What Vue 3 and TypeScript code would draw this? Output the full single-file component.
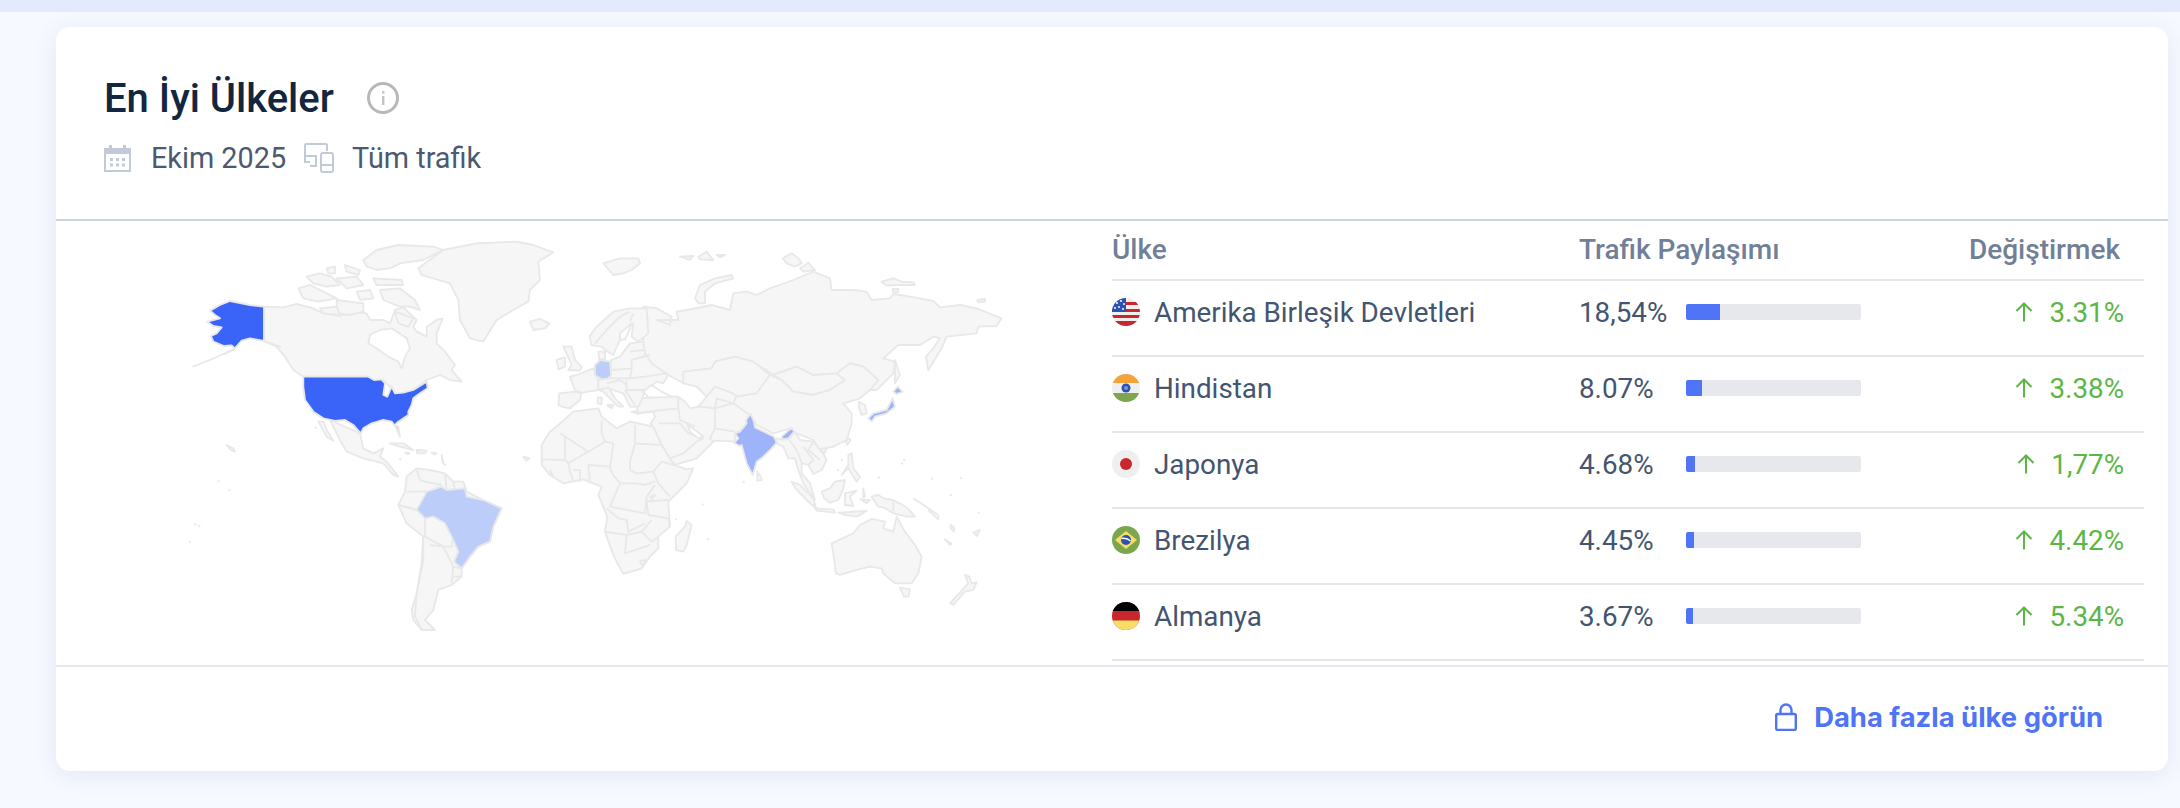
<script setup lang="ts">
type Shape = [string, string];
interface MapGroup {
  x: number;
  y: number;
  shapes: Shape[];
}

interface CountryRow {
  code: string;
  name: string;
  share: string;
  bar: number;
  change: string;
}

const rows: CountryRow[] = [
  { code: 'us', name: 'Amerika Birleşik Devletleri', share: '18,54%', bar: 34, change: '3.31%' },
  { code: 'in', name: 'Hindistan', share: '8.07%', bar: 16, change: '3.38%' },
  { code: 'jp', name: 'Japonya', share: '4.68%', bar: 9, change: '1,77%' },
  { code: 'br', name: 'Brezilya', share: '4.45%', bar: 8, change: '4.42%' },
  { code: 'de', name: 'Almanya', share: '3.67%', bar: 7, change: '5.34%' },
];

// traced from the reference, each group has its own origin
const mapGroups: MapGroup[] = [
  {
    x: 150,
    y: 220,
    shapes: [
      ['land', '342,260 400,262 440,252 490,265 520,280 570,288 610,275 650,280 660,300 700,300 720,310 735,270 760,262 800,300 790,320 800,335 830,350 830,320 860,300 878,295 860,340 860,370 885,395 915,435 905,450 935,485 900,480 870,465 830,480 790,510 760,525 735,530 725,505 700,480 670,488 655,470 460,470 430,450 405,410 375,375 342,363'],
      ['water', '660,345 690,330 725,325 770,355 780,385 765,410 755,445 745,425 715,410 680,385 655,370'],
      ['land', '805,145 880,90 980,70 1100,65 1150,75 1210,97 1165,125 1170,180 1140,210 1135,245 1090,270 1040,300 1000,365 960,355 930,300 925,240 900,190 850,175 815,165'],
      ['land', '470,170 510,160 545,170 570,195 530,200 490,190'],
      ['land', '445,205 480,195 520,215 560,235 505,245 460,235'],
      ['land', '530,145 555,140 555,160 535,160'],
      ['land', '585,135 630,150 625,165 590,155'],
      ['land', '560,175 620,170 640,195 590,205'],
      ['land', '640,120 680,90 745,75 850,80 880,90 820,120 750,130 720,145 680,150 650,140'],
      ['land', '670,175 755,180 760,195 680,195'],
      ['land', '620,215 660,210 670,235 630,240'],
      ['land', '690,210 750,205 795,240 810,270 780,260 750,260 700,240'],
      ['land', '560,240 640,250 640,275 600,285 560,280'],
      ['land', '510,265 560,260 570,285 520,280'],
      ['land', '735,275 790,295 775,320 745,310'],
      ['line', '128,440 180,420 220,402'],
      ['us', '342,260 300,255 240,243 210,255 180,272 195,285 210,295 172,305 190,318 215,322 200,340 183,348 190,365 222,378 245,376 255,385 235,395 220,403 250,390 275,362 300,355 342,363'],
      ['us', '345,365 365,372 390,380 375,378'],
      ['us', '460,470 655,470 672,480 695,478 705,490 700,525 712,530 725,500 735,520 760,518 790,510 830,485 833,505 810,520 790,535 785,555 775,575 775,585 745,605 735,615 745,620 750,650 740,625 725,605 700,600 665,610 640,625 632,640 610,615 585,600 555,603 520,595 490,575 465,540 460,500'],
    ],
  },
  {
    x: 150,
    y: 420,
    shapes: [
      ['land', '505,5 530,50 550,62 530,30 520,5'],
      ['land', '540,0 630,40 640,85 670,100 700,85 690,110 710,125 745,170 730,165 700,130 640,115 590,95 570,60'],
      ['land', '720,70 760,70 790,90 750,80'],
      ['land', '800,90 830,92 825,100 802,100'],
      ['land', '765,98 778,98 775,103'],
      ['land', '230,75 250,85 255,95 242,90'],
      ['land', '1120,110 1138,115 1130,122'],
      ['land', '205,183 207,184'],
      ['land', '237,210 239,211'],
      ['land', '135,313 137,314'],
      ['land', '147,318 149,319'],
      ['land', '118,365 120,366'],
      ['land', '497,23 499,24'],
      ['land', '750,117 752,118'],
      ['land', '875,105 878,128 885,135 880,128'],
      ['land', '845,98 860,100 855,103'],
      ['land', '770,170 800,145 840,150 885,160 910,185 940,185 950,215 1000,240 1055,265 1030,320 1020,365 985,380 960,410 935,445 935,470 905,495 865,510 850,570 825,600 855,630 815,630 790,600 785,570 800,520 820,420 820,350 770,310 745,255 765,215'],
      ['line', '770,215 830,215'],
      ['line', '800,150 810,180 825,185 875,195'],
      ['line', '885,160 890,210'],
      ['line', '910,185 915,210'],
      ['line', '745,255 800,270'],
      ['line', '825,295 825,350 880,380 905,380 910,350'],
      ['line', '820,350 815,430 800,520 795,590 815,628'],
      ['line', '840,375 880,380 910,440 905,490'],
      ['line', '905,440 935,445'],
      ['line', '905,470 935,470'],
      ['br', '800,270 830,215 875,200 890,210 945,205 950,230 1000,240 1055,265 1030,320 1020,365 985,380 960,410 935,445 912,425 925,395 905,350 885,310 850,290 825,295'],
    ],
  },
  {
    x: 600,
    y: 220,
    shapes: [
      ['land', '130,260 170,265 215,290 210,315 170,300 235,300 230,275 260,270 335,255 390,270 400,220 440,215 470,225 510,205 580,180 640,155 690,175 695,210 760,210 800,215 815,240 870,235 880,222 930,230 1000,243 1020,262 1080,255 1130,265 1205,295 1190,318 1135,320 1130,340 1040,350 1025,385 985,450 978,410 1000,385 1020,355 1000,350 960,375 895,375 850,415 885,425 880,460 830,510 810,510 835,480 790,440 750,430 710,460 640,465 590,440 520,465 460,425 405,410 345,425 335,445 255,455 250,490 205,465 150,435 125,400 130,370 125,320 145,300 125,270'],
      ['land', '250,455 335,445 345,425 405,410 460,425 510,465 480,510 470,520 410,530 400,550 345,565 295,560 320,530 290,500 250,490'],
      ['land', '520,465 590,440 640,465 710,460 735,480 690,510 640,525 580,515 545,480'],
      ['land', '510,465 545,480 580,515 640,525 690,510 735,480 710,460 750,430 790,440 835,480 810,510 780,535 730,550 755,580 755,610 740,660 700,680 660,690 640,660 590,640 570,625 520,640 470,615 455,590 400,550 410,530 470,520'],
      ['land', '775,545 795,555 800,580 785,585 778,565'],
      ['land', '885,420 900,465 885,490 885,450'],
      ['land', '285,235 300,195 345,175 395,165 400,175 345,190 315,215 315,250 295,250'],
      ['land', '10,130 60,115 115,115 120,130 95,150 70,160 40,165'],
      ['land', '240,110 280,108 270,120'],
      ['land', '295,110 320,95 340,120 300,118'],
      ['land', '350,105 375,105 360,112'],
      ['land', '548,115 575,100 595,115 605,130 585,140 560,130'],
      ['land', '600,145 625,128 645,150 610,155'],
      ['land', '845,185 880,175 905,185 940,187 945,195 890,195 860,197'],
      ['land', '878,207 895,207 895,217 880,217'],
      ['land', '1132,240 1155,237 1155,245 1135,247'],
      ['land', '115,535 190,530 235,530 255,545 270,565 295,560 345,565 400,550 455,590 435,625 405,640 405,665 345,662 335,670 290,715 225,735 208,715 160,630 152,610 165,590 160,575 110,580'],
      ['line', '110,580 170,572 235,565 235,530'],
      ['line', '235,565 240,600 285,620'],
      ['line', '345,565 345,625 330,655 340,665'],
      ['line', '345,625 405,635'],
      ['line', '175,610 240,610 265,640 310,655'],
      ['line', '210,715 250,700 290,665 310,655'],
      ['line', '320,530 345,500 400,520 410,530'],
      ['line', '345,565 350,535 400,550'],
      ['water', '262,615 285,630 310,650 295,655 270,635'],
      ['land', '530,655 548,660 568,655 585,635 600,660 640,665 660,690 670,700 680,720 665,750 640,762 625,735 605,730 605,760 630,790 645,840 610,790 595,750 585,715 565,715 550,680 530,670'],
      ['line', '568,660 590,690 600,715 605,730'],
      ['line', '610,680 640,720 625,735'],
      ['line', '640,665 625,690 660,720'],
      ['land', '472,755 482,770 485,780 472,782'],
      ['land', '575,785 600,795 640,835 648,865 620,840 590,810'],
      ['land', '645,865 700,868 705,878 650,872'],
      ['land', '715,878 800,873 770,890 735,885'],
      ['land', '665,815 690,805 705,785 735,780 730,805 715,840 690,848 672,835'],
      ['land', '735,820 770,812 750,830 760,858 735,855'],
      ['land', '780,838 810,840 800,850'],
      ['land', '790,805 795,830 790,832'],
      ['land', '745,705 755,700 760,745 780,770 770,785 745,745 725,765 745,735'],
      ['land', '745,655 752,660 742,675 738,665'],
      ['land', '665,685 680,685 675,698 665,695'],
      ['land', '815,830 835,825 850,835 880,840 920,862 945,890 920,890 880,880 850,862 835,860'],
      ['line', '880,845 880,875'],
      ['line', '940,835 985,865 1015,885 1015,898 985,870'],
      ['land', '1052,915 1062,922 1062,935 1052,925'],
      ['land', '1035,958 1055,972 1050,975'],
      ['land', '1120,937 1140,930 1130,948'],
      ['land', '695,970 760,940 780,915 815,897 855,905 850,925 880,935 890,890 915,935 945,975 965,1010 955,1060 935,1090 885,1090 850,1060 845,1045 810,1040 770,1050 720,1065 708,1060 700,1000'],
      ['land', '900,1103 930,1108 925,1130 912,1130'],
      ['land', '1095,1065 1108,1070 1115,1090 1130,1087 1120,1110 1095,1115 1060,1155 1050,1150 1085,1112 1105,1090'],
      ['land', '430,785 432,786'],
      ['land', '308,853 310,854'],
      ['land', '228,898 230,899'],
      ['land', '322,957 324,958'],
      ['land', '912,720 914,721'],
      ['land', '905,730 907,731'],
      ['land', '836,772 838,773'],
      ['land', '995,776 997,777'],
      ['land', '1082,774 1084,775'],
      ['land', '1052,825 1054,826'],
      ['land', '1135,878 1137,879'],
      ['land', '725,720 727,721'],
      ['land', '712,750 714,751'],
      ['in', '452,582 438,600 440,610 420,635 405,640 415,655 403,668 418,678 425,675 440,730 458,765 470,725 490,710 512,688 530,668 522,650 465,622 462,605'],
      ['in', '545,650 575,623 583,635 565,655 548,658'],
      ['in', '820,580 860,570 878,535 885,560 860,580 825,590 815,605 805,595'],
      ['in', '880,515 893,500 908,515 890,522'],
    ],
  },
  {
    x: 530,
    y: 310,
    shapes: [
      ['land', '88,250 135,245 155,250 150,270 120,295 95,290 85,285'],
      ['land', '120,200 140,195 190,175 205,210 205,240 155,248 135,240'],
      ['land', '100,110 125,110 135,150 155,170 150,182 115,180 125,165'],
      ['land', '80,150 105,142 105,170 85,178'],
      ['land', '0,35 30,27 58,40 45,55 10,60'],
      ['land', '205,125 225,125 225,150 208,148'],
      ['land', '178,80 200,50 250,5 300,-5 350,-5 355,70 325,95 305,80 310,40 285,60 265,100 250,135 225,120 215,110 185,105'],
      ['water', '270,70 305,40 298,60 285,88 270,90'],
      ['land', '243,150 270,140 300,100 340,95 345,130 365,160 415,195 400,220 380,215 345,240 335,270 325,290 300,290 280,250 235,235 205,240 205,210 235,205 243,195'],
      ['land', '205,240 235,232 255,265 280,290 265,290 240,265 220,245'],
      ['land', '203,262 215,262 215,282 203,280'],
      ['land', '232,285 250,285 245,295'],
      ['land', '305,305 325,305 325,312'],
      ['land', '235,290 240,292'],
      ['line', '245,180 305,175 305,150 360,135'],
      ['line', '305,175 300,205 345,200 410,190'],
      ['line', '235,205 300,205'],
      ['line', '290,210 290,240 345,240'],
      ['line', '230,220 270,210 290,225'],
      ['line', '300,125 345,120'],
      ['line', '285,240 315,285'],
      ['line', '195,100 230,60 270,20 300,5'],
      ['line', '310,10 300,35'],
      ['water', '340,245 365,225 395,245 425,260 405,262 355,262'],
      ['de', '195,165 210,150 240,155 243,195 235,205 215,208 195,195'],
    ],
  },
  {
    x: 530,
    y: 420,
    shapes: [
      ['land', '35,75 60,35 85,15 130,-25 205,-35 215,-10 260,25 300,5 370,20 395,75 432,135 470,148 490,145 470,190 430,230 415,245 420,320 385,350 385,385 360,410 335,445 280,462 262,430 248,400 225,335 232,290 205,225 215,200 190,190 160,178 100,190 60,165 35,135 35,110'],
      ['land', '470,303 485,315 470,375 460,395 438,390 437,350 465,320'],
      ['line', '90,40 175,95 225,65 250,70'],
      ['line', '105,50 105,120'],
      ['line', '35,118 105,120 115,130 175,95'],
      ['line', '215,0 215,40 225,65'],
      ['line', '315,15 315,70 300,125'],
      ['line', '250,70 240,145 250,165'],
      ['line', '300,125 300,150 320,160 370,155 395,125 432,135'],
      ['line', '315,70 395,75'],
      ['line', '180,190 175,135 240,140'],
      ['line', '250,165 270,190 320,190 345,195 375,185'],
      ['line', '370,155 385,190 420,230'],
      ['line', '270,190 240,260 345,280 350,230 375,195'],
      ['line', '345,245 415,240'],
      ['line', '350,245 355,285 415,295 420,320'],
      ['line', '230,265 265,295 290,300 295,335 345,310'],
      ['line', '225,335 290,345 285,400 360,375'],
      ['line', '290,345 335,335 365,300'],
      ['line', '335,335 365,365 385,350'],
      ['line', '115,130 120,155 130,185'],
      ['line', '60,150 70,170'],
      ['line', '130,150 150,150 150,185'],
      ['land', '330,423 345,420 345,430 335,435'],
      ['water', '360,230 375,225 365,238'],
    ],
  },
];
</script>

<template>
  <div class="page">
    <div class="top-band"></div>
    <div class="content">
      <section class="card">
        <header class="card-head">
          <div class="title-row">
            <h2>En İyi Ülkeler</h2>
            <svg class="info" viewBox="0 0 32 32" width="32" height="32">
              <circle cx="16" cy="16" r="14.500" fill="none" stroke="#b8b8b8" stroke-width="3" />
              <rect x="15" y="14" width="2.400" height="9" fill="#c4c4c4" />
              <rect x="15" y="9" width="2.400" height="2.600" fill="#c4c4c4" />
            </svg>
          </div>
          <div class="meta-row">
            <svg viewBox="0 0 27 28" width="27" height="28">
              <path d="M1 5h25v22H1z" fill="none" stroke="#c3cad7" stroke-width="2" />
              <rect x="1" y="4" width="25" height="6" fill="#c3cad7" />
              <rect x="5" y="1" width="3" height="5" fill="#c3cad7" />
              <rect x="19" y="1" width="3" height="5" fill="#c3cad7" />
              <g fill="#c3cad7">
                <rect x="6" y="14" width="3" height="3" /><rect x="12" y="14" width="3" height="3" /><rect x="18" y="14" width="3" height="3" />
                <rect x="6" y="19.500" width="3" height="3" /><rect x="12" y="19.500" width="3" height="3" /><rect x="18" y="19.500" width="3" height="3" />
              </g>
            </svg>
            <span class="meta-date">Ekim 2025</span>
            <svg class="device" viewBox="0 0 30 30" width="30" height="30">
              <path d="M23 8V2a1 1 0 0 0-1-1H2a1 1 0 0 0-1 1v17h5" fill="none" stroke="#c3cad7" stroke-width="2" />
              <path d="M1 13h11v10H6" fill="none" stroke="#c3cad7" stroke-width="2" />
              <rect x="17" y="10" width="12" height="19" rx="2" fill="none" stroke="#c3cad7" stroke-width="2" />
              <rect x="17" y="21" width="12" height="2" fill="#c3cad7" />
            </svg>
            <span>Tüm trafik</span>
          </div>
        </header>

        <div class="card-body">
          <div class="map-box">
            <svg viewBox="56 221 1056 444" width="1056" height="444">
              <g v-for="(g, i) in mapGroups" :key="i" :transform="`translate(${g.x} ${g.y}) scale(0.3333)`">
                <template v-for="(s, j) in g.shapes" :key="j">
                  <polyline v-if="s[0] === 'line'" class="line" :points="s[1]" />
                  <polygon v-else :class="s[0]" :points="s[1]" />
                </template>
              </g>
            </svg>
          </div>

          <div class="table">
            <div class="row head-row">
              <div class="col-name">Ülke</div>
              <div class="col-share">Trafik Paylaşımı</div>
              <div class="col-change">Değiştirmek</div>
            </div>
            <div v-for="row in rows" :key="row.code" class="row">
              <div class="col-name">
                <svg class="flag" viewBox="0 0 28 28" width="28" height="28">
                  <template v-if="row.code === 'us'">
                    <rect width="28" height="28" fill="#efefef" />
                    <g fill="#c8272e">
                      <rect y="4" width="28" height="3" /><rect y="11" width="28" height="3" />
                      <rect y="17" width="28" height="3" /><rect y="23" width="28" height="5" />
                    </g>
                    <rect width="14" height="14" fill="#2a53b5" />
                    <g fill="#fff">
                      <circle cx="5" cy="5" r="1" /><circle cx="9" cy="3" r="1" /><circle cx="12" cy="6" r="1" />
                      <circle cx="3" cy="10" r="1" /><circle cx="7" cy="9" r="1" /><circle cx="11" cy="11" r="1" />
                    </g>
                  </template>
                  <template v-else-if="row.code === 'in'">
                    <rect width="28" height="28" fill="#efefef" />
                    <rect width="28" height="9" fill="#f3a33a" />
                    <rect y="19" width="28" height="9" fill="#7ea650" />
                    <circle cx="14" cy="14" r="4.500" fill="#2a53b5" />
                    <circle cx="14" cy="14" r="2" fill="#7d93d4" />
                  </template>
                  <template v-else-if="row.code === 'jp'">
                    <rect width="28" height="28" fill="#efefef" />
                    <circle cx="14" cy="14" r="6" fill="#c8272e" />
                  </template>
                  <template v-else-if="row.code === 'br'">
                    <rect width="28" height="28" fill="#7ba650" />
                    <polygon points="14,5 25,14 14,23 3,14" fill="#fbdc60" />
                    <circle cx="14" cy="14" r="5" fill="#2a53b5" />
                    <path d="M9.500 12.500c3-.6 6.500 0 9 2.500" fill="none" stroke="#fff" stroke-width="1.300" />
                  </template>
                  <template v-else>
                    <rect width="28" height="28" fill="#c8272e" />
                    <rect width="28" height="9" fill="#000" />
                    <rect y="18.500" width="28" height="9.500" fill="#f9dc66" />
                  </template>
                </svg>
                <span>{{ row.name }}</span>
              </div>
              <div class="col-share">
                <span class="pct">{{ row.share }}</span>
                <div class="track">
                  <div class="fill" :style="{ width: row.bar + 'px' }"></div>
                </div>
              </div>
              <div class="col-change">
                <svg class="arrow" viewBox="0 0 18 20" width="18" height="20">
                  <path d="M9 19.500V1.500M1.500 9L9 1.500 16.500 9" fill="none" stroke="#5cb646" stroke-width="2" />
                </svg>
                <span>{{ row.change }}</span>
              </div>
            </div>
          </div>
        </div>

        <footer class="card-foot">
          <a class="more">
            <svg viewBox="0 0 22 28" width="22" height="28">
              <rect x="1.200" y="11" width="19.600" height="16" rx="1.500" fill="none" stroke="#4f74f5" stroke-width="2.400" />
              <path d="M5.500 11V7a5.500 5.500 0 0 1 11 0v4" fill="none" stroke="#4f74f5" stroke-width="2.400" />
            </svg>
            <span>Daha fazla ülke görün</span>
          </a>
        </footer>
      </section>
    </div>
  </div>
</template>

<style>
html,
body {
  margin: 0;
  background: #f6f9ff;
}
</style>

<style scoped>
.page {
  width: 2180px;
  height: 808px;
  overflow: hidden;
  background: #f6f9ff;
  font-family: Roboto, "Liberation Sans", sans-serif;
  color: #435570;
}

.top-band {
  height: 12px;
  background: #e4eafc;
}

.content {
  padding: 15px 12px 0 56px;
}

.card {
  height: 744px;
  box-sizing: border-box;
  background: #fff;
  border-radius: 14px;
  box-shadow: 0 4px 24px rgba(40, 60, 120, 0.09);
  display: flex;
  flex-direction: column;
}

.card-head {
  height: 194px;
  flex: none;
  box-sizing: border-box;
  padding: 49px 0 0 48px;
  border-bottom: 2px solid #ccd2d9;
}

.title-row {
  display: flex;
  align-items: center;
  gap: 33px;
  height: 44px;
}

h2 {
  margin: 0;
  font-size: 40px;
  font-weight: 500;
  color: #12263f;
}

.meta-row {
  display: flex;
  align-items: center;
  gap: 18px;
  margin-top: 21px;
  font-size: 28.800px;
  color: #4b5a70;
  height: 34px;
}

.meta-date {
  margin-left: 2px;
}

.card-body {
  flex: none;
  height: 444px;
  display: flex;
}

.map-box {
  width: 1056px;
  flex: none;
  height: 444px;
}

.map-box svg {
  display: block;
}

.land,
.water,
.us,
.in,
.br,
.de {
  stroke: #e8e8e8;
  stroke-width: 5.500;
  stroke-linejoin: round;
}

.land {
  fill: #f6f6f6;
}

.water {
  fill: #fff;
}

.line {
  fill: none;
  stroke: #e8e8e8;
  stroke-width: 5.500;
  stroke-linejoin: round;
}

.us {
  fill: #3a64f8;
}

.in {
  fill: #9db3fa;
}

.br,
.de {
  fill: #bccdf9;
}

.table {
  width: 1032px;
  flex: none;
}

.row {
  height: 76px;
  box-sizing: border-box;
  border-bottom: 2px solid #e6e8ee;
  display: flex;
  padding-top: 13px;
  font-size: 27.800px;
}

.head-row {
  height: 60px;
  padding-top: 10px;
  font-size: 28px;
  font-weight: 500;
  color: #718096;
}

.col-name {
  width: 467px;
  flex: none;
  display: flex;
  align-items: center;
  gap: 14px;
  height: 36px;
}

.flag {
  border-radius: 50%;
  flex: none;
}

.col-share {
  width: 320px;
  flex: none;
  display: flex;
  align-items: center;
  height: 36px;
}

.pct {
  width: 107px;
  flex: none;
}

.track {
  width: 175px;
  height: 16px;
  background: #e6e8ec;
  border-radius: 2px;
  overflow: hidden;
}

.fill {
  height: 100%;
  background: #4f74f5;
}

.col-change {
  flex: 1;
  display: flex;
  align-items: center;
  justify-content: flex-end;
  gap: 16px;
  height: 36px;
  padding-right: 20px;
}

.head-row .col-change {
  padding-right: 24px;
  white-space: nowrap;
}

.row:not(.head-row) .col-change {
  color: #5cb646;
}

.card-foot {
  flex: 1;
  border-top: 2px solid #e6e8ee;
  display: flex;
  align-items: center;
  justify-content: flex-end;
  padding: 0 65px 4px 0;
}

.more {
  display: flex;
  align-items: center;
  gap: 17px;
  font-family: Inter, sans-serif;
  font-size: 27.400px;
  font-weight: 700;
  color: #4f74f5;
  cursor: pointer;
}
</style>
